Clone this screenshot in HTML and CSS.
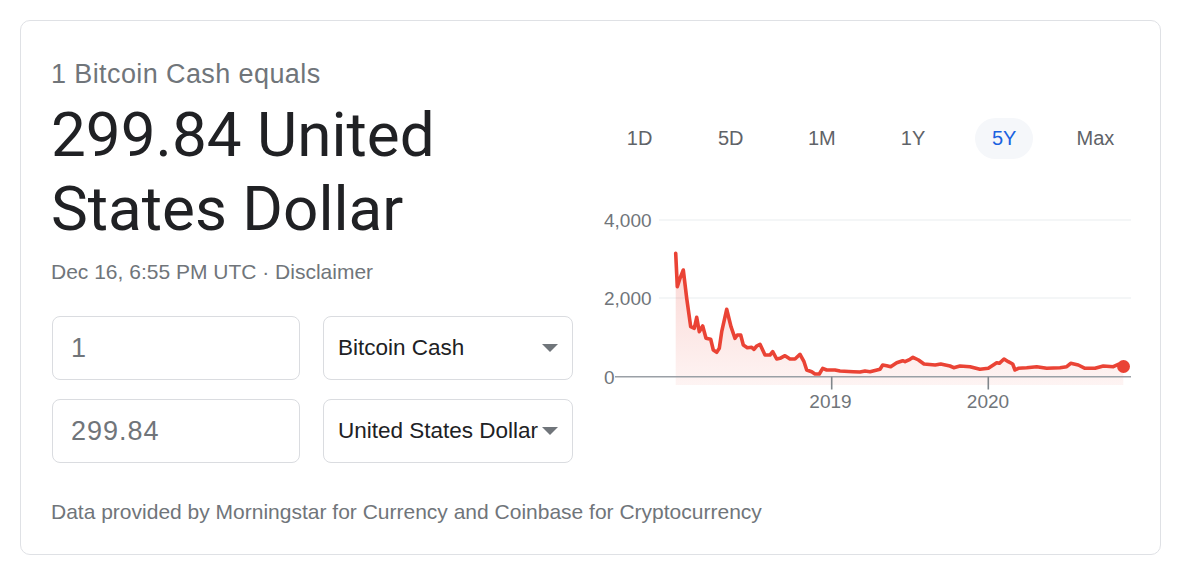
FILE: index.html
```html
<!DOCTYPE html>
<html>
<head>
<meta charset="utf-8">
<link rel="stylesheet" href="styles.css">
</head>
<body>
<div class="card">
  <div class="left">
    <div class="equals">1 Bitcoin Cash equals</div>
    <div class="result">299.84 United States Dollar</div>
    <div class="date">Dec 16, 6:55 PM UTC · Disclaimer</div>
    <div class="form">
      <div class="field input">1</div>
      <div class="field select"><span>Bitcoin Cash</span><span class="arrow"></span></div>
      <div class="field input">299.84</div>
      <div class="field select"><span>United States Dollar</span><span class="arrow"></span></div>
    </div>
    <div class="footer">Data provided by Morningstar for Currency and Coinbase for Cryptocurrency</div>
  </div>
  <div class="right">
    <div class="tabs">
      <div class="tab"><span>1D</span></div>
      <div class="tab"><span>5D</span></div>
      <div class="tab"><span>1M</span></div>
      <div class="tab"><span>1Y</span></div>
      <div class="tab active"><span>5Y</span></div>
      <div class="tab"><span>Max</span></div>
    </div>
    <svg class="chart" width="547" height="220" viewBox="594 200 547 220">
      <defs>
        <linearGradient id="fillg" x1="0" y1="0" x2="0" y2="1">
          <stop offset="0" stop-color="#ea4335" stop-opacity="0.22"/>
          <stop offset="1" stop-color="#ea4335" stop-opacity="0.06"/>
        </linearGradient>
      </defs>
      <line x1="659" y1="220" x2="1131" y2="220" stroke="#f1f3f4" stroke-width="1.5"/>
      <line x1="659" y1="298" x2="1131" y2="298" stroke="#f1f3f4" stroke-width="1.5"/>
      <text class="ylab" x="604" y="227">4,000</text>
      <text class="ylab" x="604" y="305">2,000</text>
      <text class="ylab" x="604" y="383.5">0</text>
      <path fill="url(#fillg)" d="M675.7,253.3 L677.3,286.7 L680,278.3 L683.3,270 L686.7,298.3 L690.7,326.7 L694.3,328.3 L696.7,317.3 L699.3,331.7 L702.7,326 L706,338.3 L710.7,339.3 L713.3,350 L716.7,352.3 L719.3,348.3 L721.7,331.7 L726.7,309.3 L731,326.7 L735,338.3 L737.3,335 L740.7,335 L743.3,345 L747.3,347.7 L751.7,347.3 L754,349.3 L756.7,346 L760,344.3 L765,355 L770,355 L772.7,351.7 L776.7,359 L780,358.3 L785,355.7 L790,359 L795,359 L800,354.3 L804,361.7 L806.7,370 L811.7,371.7 L815,374 L819.3,374 L822.7,368.3 L826.7,370 L835,370 L840,371 L853.3,371.7 L860,372 L865,371 L870,371.7 L880,369.3 L882.7,365 L886.7,365.7 L890.7,366.7 L896.7,362.7 L902.7,360.7 L905,361.7 L910,359.3 L913,357.3 L918.5,360 L924,364 L935.2,365 L940.7,364 L950,366 L953.7,367.7 L960,366 L970,366.7 L980,369.3 L988.3,368.3 L993.3,365 L996.7,362.7 L999.3,363.3 L1004,359 L1008.3,361.7 L1012.7,364 L1015,370 L1018.3,368.3 L1026.7,367.7 L1036.7,366.7 L1046.7,368.3 L1060,367.7 L1066.7,366.7 L1070.7,363.3 L1078.3,365 L1085,368.3 L1095,368.3 L1103.3,366 L1113.3,366.7 L1118.3,364.3 L1123.3,366.7 L1123.3,385 L675.7,385 Z"/>
      <line x1="615" y1="376.7" x2="1131" y2="376.7" stroke="#9aa0a6" stroke-width="1.6"/>
      <line x1="831.7" y1="376.7" x2="831.7" y2="389.5" stroke="#80868b" stroke-width="1.6"/>
      <line x1="988.3" y1="376.7" x2="988.3" y2="389.5" stroke="#80868b" stroke-width="1.6"/>
      <text class="xlab" x="830.5" y="407.5">2019</text>
      <text class="xlab" x="988" y="407.5">2020</text>
      <path fill="none" stroke="#ea4335" stroke-width="3.6" stroke-linejoin="round" stroke-linecap="round" d="M675.7,253.3 L677.3,286.7 L680,278.3 L683.3,270 L686.7,298.3 L690.7,326.7 L694.3,328.3 L696.7,317.3 L699.3,331.7 L702.7,326 L706,338.3 L710.7,339.3 L713.3,350 L716.7,352.3 L719.3,348.3 L721.7,331.7 L726.7,309.3 L731,326.7 L735,338.3 L737.3,335 L740.7,335 L743.3,345 L747.3,347.7 L751.7,347.3 L754,349.3 L756.7,346 L760,344.3 L765,355 L770,355 L772.7,351.7 L776.7,359 L780,358.3 L785,355.7 L790,359 L795,359 L800,354.3 L804,361.7 L806.7,370 L811.7,371.7 L815,374 L819.3,374 L822.7,368.3 L826.7,370 L835,370 L840,371 L853.3,371.7 L860,372 L865,371 L870,371.7 L880,369.3 L882.7,365 L886.7,365.7 L890.7,366.7 L896.7,362.7 L902.7,360.7 L905,361.7 L910,359.3 L913,357.3 L918.5,360 L924,364 L935.2,365 L940.7,364 L950,366 L953.7,367.7 L960,366 L970,366.7 L980,369.3 L988.3,368.3 L993.3,365 L996.7,362.7 L999.3,363.3 L1004,359 L1008.3,361.7 L1012.7,364 L1015,370 L1018.3,368.3 L1026.7,367.7 L1036.7,366.7 L1046.7,368.3 L1060,367.7 L1066.7,366.7 L1070.7,363.3 L1078.3,365 L1085,368.3 L1095,368.3 L1103.3,366 L1113.3,366.7 L1118.3,364.3 L1123.3,366.7"/>
      <circle cx="1123.5" cy="366.5" r="6.5" fill="#ea4335"/>
    </svg>
  </div>
</div>
</body>
</html>
```
FILE: styles.css
```css
html, body {
  margin: 0;
  padding: 0;
  background: #ffffff;
}
body {
  font-family: Arial, "Liberation Sans", sans-serif;
}
.card {
  box-sizing: border-box;
  margin: 20px 0 0 20px;
  width: 1141px;
  height: 535px;
  border: 1px solid #dfe1e5;
  border-radius: 10px;
  padding: 37px 19px 0 30px;
  display: flex;
  column-gap: 21px;
}
.left {
  width: 522px;
  flex: none;
}
.equals {
  font-size: 27px;
  letter-spacing: 0.4px;
  line-height: 32px;
  color: #70757a;
}
.result {
  margin-top: 8px;
  font-family: Roboto, "Noto Sans", sans-serif;
  font-size: 62px;
  line-height: 74px;
  color: #202124;
}
.date {
  margin-top: 14px;
  font-size: 21px;
  line-height: 24px;
  color: #70757a;
}
.form {
  margin: 32px 0 0 1px;
  display: grid;
  grid-template-columns: 248px 250px;
  grid-auto-rows: 64px;
  column-gap: 23px;
  row-gap: 19px;
}
.field {
  box-sizing: border-box;
  border: 1px solid #dadce0;
  border-radius: 8px;
  display: flex;
  align-items: center;
}
.input {
  padding-left: 18px;
  font-size: 27px;
  letter-spacing: 1px;
  color: #70757a;
}
.select {
  padding: 0 14px;
  justify-content: space-between;
  font-size: 22.5px;
  color: #202124;
}
.arrow {
  width: 0;
  height: 0;
  border-left: 8px solid transparent;
  border-right: 8px solid transparent;
  border-top: 8px solid #70757a;
  flex: none;
}
.footer {
  margin-top: 37px;
  font-size: 21px;
  line-height: 24px;
  color: #70757a;
  white-space: nowrap;
}
.right {
  width: 547px;
  flex: none;
}
.tabs {
  margin-top: 60px;
  display: grid;
  grid-template-columns: repeat(6, 1fr);
}
.tab {
  display: flex;
  justify-content: center;
}
.tab span {
  width: 58px;
  height: 41px;
  border-radius: 21px;
  display: flex;
  align-items: center;
  justify-content: center;
  font-size: 20px;
  color: #5f6368;
}
.tab.active span {
  background: #f5f7fa;
  color: #1a62e0;
}
.chart {
  display: block;
  margin-top: 41px;
}
.ylab {
  font-family: Arial, "Liberation Sans", sans-serif;
  font-size: 19px;
  fill: #70757a;
}
.xlab {
  font-family: Arial, "Liberation Sans", sans-serif;
  font-size: 19px;
  fill: #70757a;
  text-anchor: middle;
}
```
